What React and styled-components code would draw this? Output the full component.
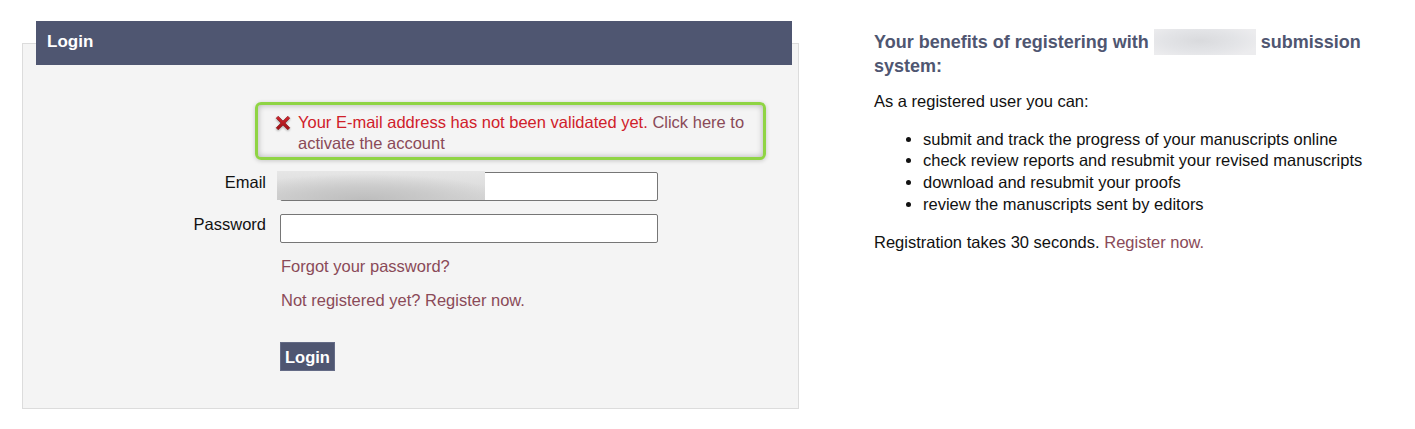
import React from "react";
import styled, { createGlobalStyle } from "styled-components";

const GlobalStyle = createGlobalStyle`
  html, body {
    margin: 0;
    padding: 0;
    background: #ffffff;
  }
  body {
    font-family: "Liberation Sans", Arial, sans-serif;
    font-size: 16.5px;
    color: #111111;
  }
  * { box-sizing: border-box; }
`;

const Page = styled.div`
  display: flex;
  align-items: flex-start;
  padding: 21px 0 0 22px;
  width: 1415px;
`;

const LoginPanel = styled.section`
  width: 777px;
  height: 366px;
  margin-top: 22px;
  border: 1px solid #dcdcdc;
  background: #f4f4f4;
  display: flex;
  flex-direction: column;
`;

const PanelHeader = styled.h2`
  margin: -23px 6px 0 13px;
  height: 44px;
  background: #4f5671;
  color: #ffffff;
  font-size: 17px;
  font-weight: bold;
  display: flex;
  align-items: center;
  padding: 0 0 2px 11px;
`;

const ErrorBox = styled.div`
  margin: 37px 0 0 232px;
  width: 511px;
  height: 58px;
  border: 3px solid #8fd444;
  border-radius: 6px;
  box-shadow: inset 0 0 6px rgba(0, 0, 0, 0.28), 0 1px 4px rgba(0, 0, 0, 0.18);
  display: flex;
  align-items: flex-start;
  padding: 7px 6px 0 17px;
  line-height: 21px;
`;

const ErrorIcon = styled.svg`
  flex: none;
  width: 16px;
  height: 16px;
  margin: 3px 7px 0 0;
  filter: drop-shadow(0 1px 1px rgba(0, 0, 0, 0.35));
`;

const ErrorText = styled.p`
  margin: 0;
  color: #d0202a;
  font-size: 16.5px;
`;

const Link = styled.a`
  color: #8a4a58;
  text-decoration: none;
  cursor: pointer;
`;

const FormGrid = styled.div`
  display: grid;
  grid-template-columns: 243px 378px;
  column-gap: 14px;
  row-gap: 13px;
  margin-top: 12px;
`;

const Label = styled.label`
  text-align: right;
  font-size: 16.5px;
  line-height: 19px;
  padding-top: 1px;
  color: #111111;
`;

const FieldWrap = styled.div`
  position: relative;
  height: 29px;
`;

const TextInput = styled.input`
  width: 378px;
  height: 29px;
  border: 1px solid #767676;
  border-radius: 2px;
  background: #ffffff;
  padding: 1px 4px;
  font-family: inherit;
  font-size: 15px;
  outline: none;
`;

const RedactedField = styled.span`
  position: absolute;
  left: -3px;
  top: -1px;
  width: 208px;
  height: 29px;
  background:
    radial-gradient(ellipse 70% 90% at 42% 100%, #bdbdbd 0%, #c9c9c9 45%, rgba(230, 230, 230, 0) 100%),
    linear-gradient(180deg, #e6e6e6 0%, #d6d6d6 100%);
`;

const FormLink = styled(Link)`
  grid-column: 2;
  display: block;
  font-size: 16.5px;
  line-height: 19px;
  margin-top: ${(p) => p.$top || 0}px;
  margin-left: 1px;
`;

const LoginButton = styled.button`
  grid-column: 2;
  justify-self: start;
  margin-top: ${(p) => p.$top || 0}px;
  height: 29px;
  padding: 0 4px;
  background: #4f5671;
  border: 1px solid #646b86;
  color: #ffffff;
  font-family: inherit;
  font-weight: bold;
  font-size: 16.5px;
  line-height: 26px;
  cursor: pointer;
`;

const Benefits = styled.aside`
  flex: 1;
  margin-left: 75px;
  padding-right: 20px;
  font-size: 16.5px;
  color: #111111;
`;

const BenefitsTitle = styled.h3`
  margin: 8px 0 0 0;
  color: #4f5671;
  font-size: 18px;
  font-weight: bold;
  line-height: 23px;
`;

const Redacted = styled.span`
  display: inline-block;
  width: 102px;
  height: 26px;
  vertical-align: -7px;
  background: radial-gradient(ellipse 60% 70% at 45% 45%, #d9dadd 0%, #e3e4e7 60%, #ececee 100%);
`;

const Paragraph = styled.p`
  margin: ${(p) => p.$top || 0}px 0 0 0;
  line-height: 21.5px;
`;

const BenefitList = styled.ul`
  margin: 16px 0 0 0;
  padding-left: 49px;
  line-height: 21.7px;
`;

const BenefitItem = styled.li`
  padding-left: 0;
`;

const items = [
  "submit and track the progress of your manuscripts online",
  "check review reports and resubmit your revised manuscripts",
  "download and resubmit your proofs",
  "review the manuscripts sent by editors",
];

export default function App() {
  return (
    <>
      <GlobalStyle />
      <Page>
        <LoginPanel>
          <PanelHeader>Login</PanelHeader>
          <ErrorBox>
            <ErrorIcon viewBox="0 0 16 16" aria-hidden="true">
              <defs>
                <linearGradient id="xg" x1="0" y1="0" x2="0" y2="1">
                  <stop offset="0" stopColor="#d2262e" />
                  <stop offset="1" stopColor="#9c1117" />
                </linearGradient>
              </defs>
              <path
                d="M3.2 1.2 L8 6 L12.8 1.2 L14.8 3.2 L10 8 L14.8 12.8 L12.8 14.8 L8 10 L3.2 14.8 L1.2 12.8 L6 8 L1.2 3.2 Z"
                fill="url(#xg)"
                stroke="#8a0f14"
                strokeWidth="0.6"
                strokeLinejoin="round"
              />
            </ErrorIcon>
            <ErrorText>
              Your E-mail address has not been validated yet.{" "}
              <Link>Click here to activate the account</Link>
            </ErrorText>
          </ErrorBox>
          <FormGrid>
            <Label htmlFor="email">Email</Label>
            <FieldWrap>
              <TextInput id="email" type="text" />
              <RedactedField />
            </FieldWrap>
            <Label htmlFor="password">Password</Label>
            <FieldWrap>
              <TextInput id="password" type="password" />
            </FieldWrap>
            <FormLink $top={1}>Forgot your password?</FormLink>
            <FormLink $top={2}>Not registered yet? Register now.</FormLink>
            <LoginButton $top={19}>Login</LoginButton>
          </FormGrid>
        </LoginPanel>
        <Benefits>
          <BenefitsTitle>
            Your benefits of registering with <Redacted /> submission system:
          </BenefitsTitle>
          <Paragraph $top={13}>As a registered user you can:</Paragraph>
          <BenefitList>
            {items.map((t) => (
              <BenefitItem key={t}>{t}</BenefitItem>
            ))}
          </BenefitList>
          <Paragraph $top={17}>
            Registration takes 30 seconds. <Link>Register now.</Link>
          </Paragraph>
        </Benefits>
      </Page>
    </>
  );
}
